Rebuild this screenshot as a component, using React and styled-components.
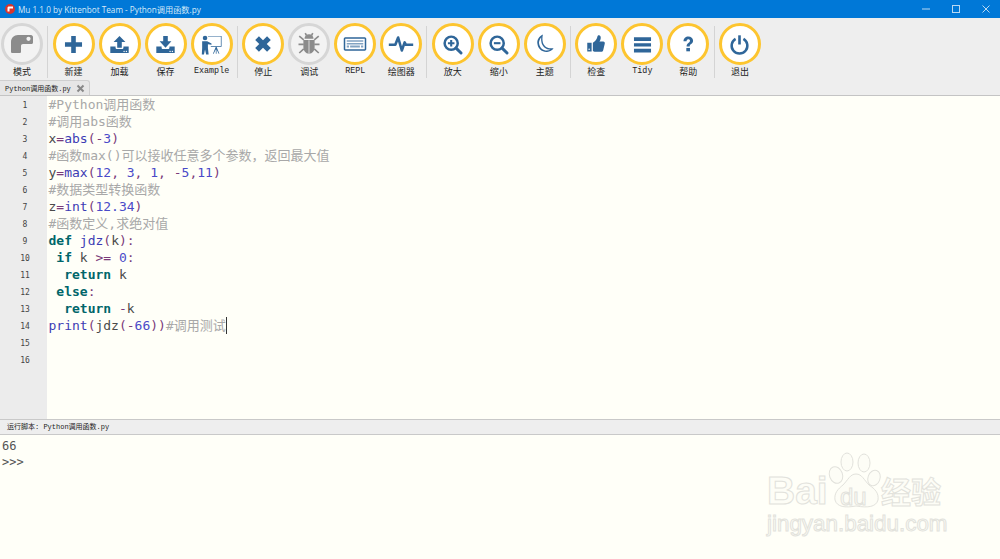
import React from "react";
import styled, { createGlobalStyle } from "styled-components";

const Global = createGlobalStyle`
  html, body { margin: 0; padding: 0; background: #fffff8; }
  body { font-family: "Noto Sans", "Noto Sans CJK SC", sans-serif; }
`;

const Window = styled.div`
  position: relative;
  width: 1000px;
  height: 559px;
  display: flex;
  flex-direction: column;
  overflow: hidden;
  background: #fffff8;
`;

const TitleBar = styled.div`
  height: 18px;
  flex: none;
  display: flex;
  align-items: center;
  background: #0078d7;
  color: #d6e9f8;
  font-family: "Open Sans", "Noto Sans CJK SC", sans-serif;
  font-size: 8.2px;
  padding-left: 5px;
`;

const TitleText = styled.span`
  margin-left: 3px;
  flex: 1;
`;

const WinButtons = styled.div`
  display: flex;
  align-items: center;
  height: 100%;
`;

const WinButton = styled.div`
  width: 30px;
  margin-right: ${(p) => p.$end || 0}px;
  display: flex;
  justify-content: center;
  align-items: center;
`;

const Toolbar = styled.div`
  height: 62px;
  flex: none;
  display: flex;
  align-items: flex-start;
  margin-left: -1px;
  background: #eeeeee;
  padding-top: 5px;
  box-sizing: border-box;
`;

const ToolButton = styled.div`
  width: 46px;
  display: flex;
  flex-direction: column;
  align-items: center;
  color: #222;
`;

const Circle = styled.div`
  width: 42px;
  height: 42px;
  box-sizing: border-box;
  border-radius: 50%;
  background: ${(p) => (p.$off ? "#f3f3f3" : "#ffffff")};
  border: 3.5px solid ${(p) => (p.$off ? "#d6d6d6" : "#fdc52f")};
  display: flex;
  justify-content: center;
  align-items: center;
`;

const Label = styled.div`
  line-height: 13px;
  white-space: nowrap;
  font-family: ${(p) => (p.$mono ? '"Liberation Mono", monospace' : '"Noto Sans CJK SC", sans-serif')};
  font-size: ${(p) => (p.$mono ? "8.4px" : "9px")};
`;

const Separator = styled.div`
  width: 1px;
  height: 52px;
  margin: 3px 2.3px 0;
  background: #d4d4d4;
  flex: none;
`;

const TabBar = styled.div`
  height: 15px;
  flex: none;
  background: #eeeeee;
  border-bottom: 1px solid #c4c4c4;
`;

const Tab = styled.div`
  width: 90px;
  height: 15px;
  box-sizing: border-box;
  display: flex;
  align-items: center;
  justify-content: space-between;
  padding: 0 4px 0 5px;
  background: #e6e6e6;
  border: 1px solid #cfcfcf;
  border-bottom: none;
  border-left: none;
  border-radius: 0 3px 0 0;
  font-family: "Liberation Mono", "Noto Sans CJK SC", monospace;
  font-size: 7px;
  white-space: nowrap;
  color: #222;
`;

const Editor = styled.div`
  flex: 1;
  display: flex;
  min-height: 0;
  background: #fffff8;
`;

const Gutter = styled.div`
  width: 47px;
  flex: none;
  background: #ececec;
`;

const LineNo = styled.div`
  height: 17px;
  line-height: 20px;
  padding-left: 12px;
  width: 30px;
  text-align: center;
  margin-left: -2px;
  font-family: "DejaVu Sans Mono", monospace;
  font-size: 8px;
  color: #444;
`;

const Code = styled.div`
  flex: 1;
  padding-left: 1.500px;
  font-family: "DejaVu Sans Mono", "Noto Sans CJK SC", monospace;
  font-size: 13px;
`;

const CodeLine = styled.div`
  height: 17px;
  line-height: 17px;
  white-space: pre;
`;

const tokenColors = {
  c: "#a8a8a8",
  b: "#3c3cb4",
  n: "#4a4ac8",
  k: "#00666a",
  o: "#7a3a7a",
  i: "#4a4a4a",
};

const Tok = styled.span`
  color: ${(p) => tokenColors[p.$t]};
  font-weight: ${(p) => (p.$t === "k" ? 700 : 400)};
`;

const Caret = styled.span`
  display: inline-block;
  width: 1px;
  height: 17px;
  vertical-align: top;
  background: #333;
`;

const Status = styled.div`
  height: 16px;
  flex: none;
  box-sizing: border-box;
  background: #eeeeee;
  border-top: 1px solid #c9c9c9;
  border-bottom: 1px solid #c9c9c9;
  padding-left: 7px;
  line-height: 15px;
  font-family: "Liberation Mono", "Noto Sans CJK SC", monospace;
  font-size: 7px;
  color: #222;
`;

const Repl = styled.div`
  height: 124px;
  flex: none;
  padding: 3px 0 0 2px;
  box-sizing: border-box;
  background: #fffff8;
  font-family: "DejaVu Sans Mono", monospace;
  font-size: 12px;
  line-height: 16px;
  color: #555;
`;

const Watermark = styled.div`
  position: absolute;
  left: 766px;
  top: 451px;
  width: 182px;
  height: 86px;
  color: #fdfdf6;
  -webkit-text-stroke: 1px #e2e2dc;
  pointer-events: none;
`;

const MarkBai = styled.span`
  position: absolute;
  left: 1px;
  top: 18px;
  font-family: "Liberation Sans", sans-serif;
  font-weight: 700;
  font-size: 39px;
  line-height: 44px;
`;

const MarkDu = styled.span`
  position: absolute;
  left: 74px;
  top: 34px;
  font-family: "Liberation Sans", sans-serif;
  font-size: 24px;
  line-height: 24px;
`;

const MarkCn = styled.span`
  position: absolute;
  left: 115px;
  top: 22px;
  font-family: "Noto Sans CJK SC", sans-serif;
  font-weight: 700;
  font-size: 30px;
  line-height: 34px;
  white-space: nowrap;
`;

const MarkUrl = styled.span`
  position: absolute;
  left: 1px;
  top: 60px;
  font-family: "Liberation Sans", sans-serif;
  font-size: 22.400px;
  line-height: 26px;
  white-space: nowrap;
`;

const MarkPaw = styled.svg`
  position: absolute;
  left: 54px;
  top: 0;
`;

const BLUE = "#2f6699";

const Svg = ({ children, size = 21, fill = BLUE }) => (
  <svg width={size} height={size} viewBox="0 0 32 32" fill={fill}>
    {children}
  </svg>
);

const ModeIcon = () => (
  <svg width="22" height="18" viewBox="0 0 22 18" fill="#8c8c8c">
    <path d="M0 7C0 3 3 0 7 0H20C21 0 22 1 22 2V7.500C22 8.500 21 9 20 9H12C10.800 9 10 9.800 10 11V16.500C10 17.500 9.500 18 8.500 18H1.500C.5 18 0 17.500 0 16.500Z" />
    <circle cx="17.500" cy="3.800" r="2.100" fill="#f3f3f3" />
  </svg>
);
const PlusIcon = () => (
  <Svg>
    <path d="M12.500 3H19.500V12.500H29V19.500H19.500V29H12.500V19.500H3V12.500H12.500Z" />
  </Svg>
);
const TrayIcon = () => (
  <path d="M2 19H10V21C10 22.500 11 23 12 23H20C21 23 22 22.500 22 21V19H30V29H2ZM23 25.500a1 1 0 1 0 .01 0ZM26.500 25.500a1 1 0 1 0 .01 0Z" fillRule="evenodd" />
);
const LoadIcon = () => (
  <Svg>
    <path d="M16 3L25 12H19.500V21H12.500V12H7Z" />
    <TrayIcon />
  </Svg>
);
const SaveIcon = () => (
  <Svg>
    <path d="M12.500 3H19.500V11H25L16 21L7 11H12.500Z" />
    <TrayIcon />
  </Svg>
);
const ExampleIcon = () => (
  <Svg size={23}>
    <circle cx="7" cy="7" r="3.200" />
    <path d="M3 11.500H10L16 14.500V16.500L11 15.500V21L12 30H8.500L7 23L5.500 30H2.500L3 21Z" />
    <path d="M11 4H30V19H15V18H29V5H11Z" />
    <path d="M22 19H23L27 29H26L23 22.500V29H22V22.500L19 29H18Z" />
  </Svg>
);
const StopIcon = () => (
  <Svg size={20}>
    <path d="M9.500 3.500L16 10L22.500 3.500L28.500 9.500L22 16L28.500 22.500L22.500 28.500L16 22L9.500 28.500L3.500 22.500L10 16L3.500 9.500Z" />
  </Svg>
);
const BugIcon = () => (
  <Svg size={24} fill="#8c8c8c">
    <path d="M10 9C10 5.500 12.500 3 16 3S22 5.500 22 9Z" />
    <path d="M8.500 10.500H23.500V20C23.500 25 20.500 29 16 29S8.500 25 8.500 20Z" />
    <path d="M3 5.500L9 10.500M29 5.500L23 10.500M2 16.500H9M30 16.500H23M3 28L9 22.500M29 28L23 22.500M11 1.500L12.500 4.500M21 1.500L19.500 4.500" stroke="#8c8c8c" strokeWidth="2.200" fill="none" />
    <path d="M16 11V29" stroke="#f3f3f3" strokeWidth="1" />
  </Svg>
);
const KeyboardIcon = () => (
  <Svg size={24}>
    <path
      fillRule="evenodd"
      d="M3 7H29C30 7 31 8 31 9V23C31 24 30 25 29 25H3C2 25 1 24 1 23V9C1 8 2 7 3 7ZM3 9V23H29V9Z"
    />
    <path d="M5 11H27V13H5ZM5 14.500H27V16.500H5ZM5 18H8V20.500H5ZM9.500 18H22.500V20.500H9.500ZM24 18H27V20.500H24Z" opacity="0.6" />
  </Svg>
);
const PlotIcon = () => (
  <Svg size={26} fill="none">
    <path d="M1 17H9L12.500 8L17 24L20.500 14L22 17H31" stroke={BLUE} strokeWidth="3.200" strokeLinejoin="round" />
  </Svg>
);
const ZoomInIcon = () => (
  <Svg fill="none">
    <circle cx="14" cy="14" r="10" stroke={BLUE} strokeWidth="3.800" />
    <path d="M21.500 21.500L29 29" stroke={BLUE} strokeWidth="4.400" strokeLinecap="round" />
    <path d="M14 9V19M9 14H19" stroke={BLUE} strokeWidth="3.200" />
  </Svg>
);
const ZoomOutIcon = () => (
  <Svg fill="none">
    <circle cx="14" cy="14" r="10" stroke={BLUE} strokeWidth="3.800" />
    <path d="M21.500 21.500L29 29" stroke={BLUE} strokeWidth="4.400" strokeLinecap="round" />
    <path d="M9 14H19" stroke={BLUE} strokeWidth="3.200" />
  </Svg>
);
const MoonIcon = () => (
  <Svg size={22}>
    <path
      fillRule="evenodd"
      d="M13 2C7 4.500 4 10 5 16C6 23 12 28 19 27.500C23 27 26.500 25 28.500 22C21 23.500 15 20 13 14C12 10 12 6 13 2ZM10.500 6C8 9.500 6.800 12.500 7.500 16C8.500 21.500 13 25.500 18.500 25.500C20.500 25.500 22.500 25 24 24.300C17.500 24 12.500 20 11 14.500C10.300 11.500 10.200 9 10.500 6Z"
    />
  </Svg>
);
const ThumbIcon = () => (
  <Svg size={20}>
    <path d="M2 14H9V28H2Z" />
    <path d="M11 14C14 12 17 9 18 5C18.500 3 19 2 20.500 2C23 2 24 4.500 23.500 7C23.200 9 22.500 10.500 21.500 12H27.500C29.500 12 30.500 13.500 30 15.500L27.500 26C27 27.500 26 28.500 24 28.500H15C13 28.500 12 27.500 11 27Z" />
    <circle cx="5" cy="24.500" r="1.200" fill="#fff" />
  </Svg>
);
const BarsIcon = () => (
  <Svg>
    <path d="M3 5H29V10.500H3ZM3 14H29V19H3ZM3 22.500H29V28H3Z" />
  </Svg>
);
const HelpIcon = () => (
  <Svg size={18}>
    <path d="M8 11C8 5.500 12 2.500 16.500 2.500C21.500 2.500 25 5.500 25 10C25 13 23.500 14.500 21.500 16C19.500 17.500 19 18.500 19 20.500H13.500C13.500 17 14.500 15.500 16.500 14C18.500 12.500 19.500 11.500 19.500 10C19.500 8.500 18.300 7.500 16.500 7.500C14.500 7.500 13.500 9 13.500 11Z" />
    <path d="M13 23H19.500V29H13Z" />
  </Svg>
);
const PowerIcon = () => (
  <Svg size={21} fill="none">
    <path d="M10 7.500A12 12 0 1 0 22 7.500" stroke={BLUE} strokeWidth="3.800" />
    <path d="M16 2V16" stroke={BLUE} strokeWidth="4" />
  </Svg>
);

const groups = [
  [{ icon: ModeIcon, label: "模式", off: true }],
  [
    { icon: PlusIcon, label: "新建" },
    { icon: LoadIcon, label: "加载" },
    { icon: SaveIcon, label: "保存" },
    { icon: ExampleIcon, label: "Example", mono: true },
  ],
  [
    { icon: StopIcon, label: "停止" },
    { icon: BugIcon, label: "调试", off: true },
    { icon: KeyboardIcon, label: "REPL", mono: true },
    { icon: PlotIcon, label: "绘图器" },
  ],
  [
    { icon: ZoomInIcon, label: "放大" },
    { icon: ZoomOutIcon, label: "缩小" },
    { icon: MoonIcon, label: "主题" },
  ],
  [
    { icon: ThumbIcon, label: "检查" },
    { icon: BarsIcon, label: "Tidy", mono: true },
    { icon: HelpIcon, label: "帮助" },
  ],
  [{ icon: PowerIcon, label: "退出" }],
];

const code = [
  [["c", "#Python调用函数"]],
  [["c", "#调用abs函数"]],
  [["i", "x"], ["o", "="], ["b", "abs"], ["o", "(-"], ["n", "3"], ["o", ")"]],
  [["c", "#函数max()可以接收任意多个参数，返回最大值"]],
  [["i", "y"], ["o", "="], ["b", "max"], ["o", "("], ["n", "12"], ["o", ", "], ["n", "3"], ["o", ", "], ["n", "1"], ["o", ", -"], ["n", "5"], ["o", ","], ["n", "11"], ["o", ")"]],
  [["c", "#数据类型转换函数"]],
  [["i", "z"], ["o", "="], ["b", "int"], ["o", "("], ["n", "12.34"], ["o", ")"]],
  [["c", "#函数定义,求绝对值"]],
  [["k", "def "], ["b", "jdz"], ["o", "("], ["i", "k"], ["o", "):"]],
  [["k", " if "], ["i", "k "], ["o", ">= "], ["n", "0"], ["o", ":"]],
  [["k", "  return "], ["i", "k"]],
  [["k", " else"], ["o", ":"]],
  [["k", "  return "], ["o", "-"], ["i", "k"]],
  [["b", "print"], ["o", "("], ["i", "jdz"], ["o", "(-"], ["n", "66"], ["o", "))"], ["c", "#调用测试"]],
  [],
  [],
];

export default function App() {
  return (
    <Window>
      <Global />
      <TitleBar>
        <svg width="10" height="10" viewBox="0 0 10 10">
          <circle cx="5" cy="5" r="5" fill="#d8342c" />
          <path d="M2.500 7.500V4C2.500 3 3 2.500 4 2.500H8V4.500H4.500V7.500Z" fill="#fff" />
        </svg>
        <TitleText>Mu 1.1.0 by Kittenbot Team - Python调用函数.py</TitleText>
        <WinButtons>
          <WinButton>
            <svg width="10" height="10" viewBox="0 0 10 10"><path d="M1 5H9" stroke="#b8d8f2" strokeWidth="1" /></svg>
          </WinButton>
          <WinButton>
            <svg width="10" height="10" viewBox="0 0 10 10"><rect x="1.500" y="1.500" width="7" height="7" fill="none" stroke="#b8d8f2" strokeWidth="1" /></svg>
          </WinButton>
          <WinButton $end={-1}>
            <svg width="10" height="10" viewBox="0 0 10 10"><path d="M1.500 1.500L8.500 8.500M8.500 1.500L1.500 8.500" stroke="#b8d8f2" strokeWidth="1" /></svg>
          </WinButton>
        </WinButtons>
      </TitleBar>

      <Toolbar>
        {groups.map((group, g) => (
          <React.Fragment key={g}>
            {g > 0 && <Separator />}
            {group.map((b) => (
              <ToolButton key={b.label}>
                <Circle $off={b.off}>
                  <b.icon />
                </Circle>
                <Label $mono={b.mono}>{b.label}</Label>
              </ToolButton>
            ))}
          </React.Fragment>
        ))}
      </Toolbar>

      <TabBar>
        <Tab>
          <span>Python调用函数.py</span>
          <svg width="9" height="9" viewBox="0 0 9 9">
            <path d="M1.500 1.500L7.500 7.500M7.500 1.500L1.500 7.500" stroke="#888" strokeWidth="2" />
          </svg>
        </Tab>
      </TabBar>

      <Editor>
        <Gutter>
          {code.map((_, i) => (
            <LineNo key={i}>{i + 1}</LineNo>
          ))}
        </Gutter>
        <Code>
          {code.map((line, i) => (
            <CodeLine key={i}>
              {line.map(([t, text], j) => (
                <Tok key={j} $t={t}>{text}</Tok>
              ))}
              {i === 13 && <Caret />}
            </CodeLine>
          ))}
        </Code>
      </Editor>

      <Status>运行脚本: Python调用函数.py</Status>
      <Repl>
        <div>66</div>
        <div>&gt;&gt;&gt;</div>
      </Repl>

      <Watermark>
        <MarkPaw width="62" height="60" viewBox="0 0 62 60" fill="#fdfdf6" stroke="#e2e2dc" strokeWidth="1">
          <ellipse cx="16" cy="24" rx="6.500" ry="8.500" transform="rotate(-20 16 24)" />
          <ellipse cx="27" cy="11" rx="6" ry="9" />
          <ellipse cx="44" cy="12" rx="6" ry="9" />
          <ellipse cx="54" cy="27" rx="6" ry="8" transform="rotate(20 54 27)" />
          <path d="M36 23C42 23 44 29 49 34C55 38 59 42 58 49C56 56 48 57 36 55C25 57 17 56 15 49C14 42 18 38 23 34C28 29 30 23 36 23Z" />
        </MarkPaw>
        <MarkBai>Bai</MarkBai>
        <MarkDu>du</MarkDu>
        <MarkCn>经验</MarkCn>
        <MarkUrl>jingyan.baidu.com</MarkUrl>
      </Watermark>
    </Window>
  );
}
